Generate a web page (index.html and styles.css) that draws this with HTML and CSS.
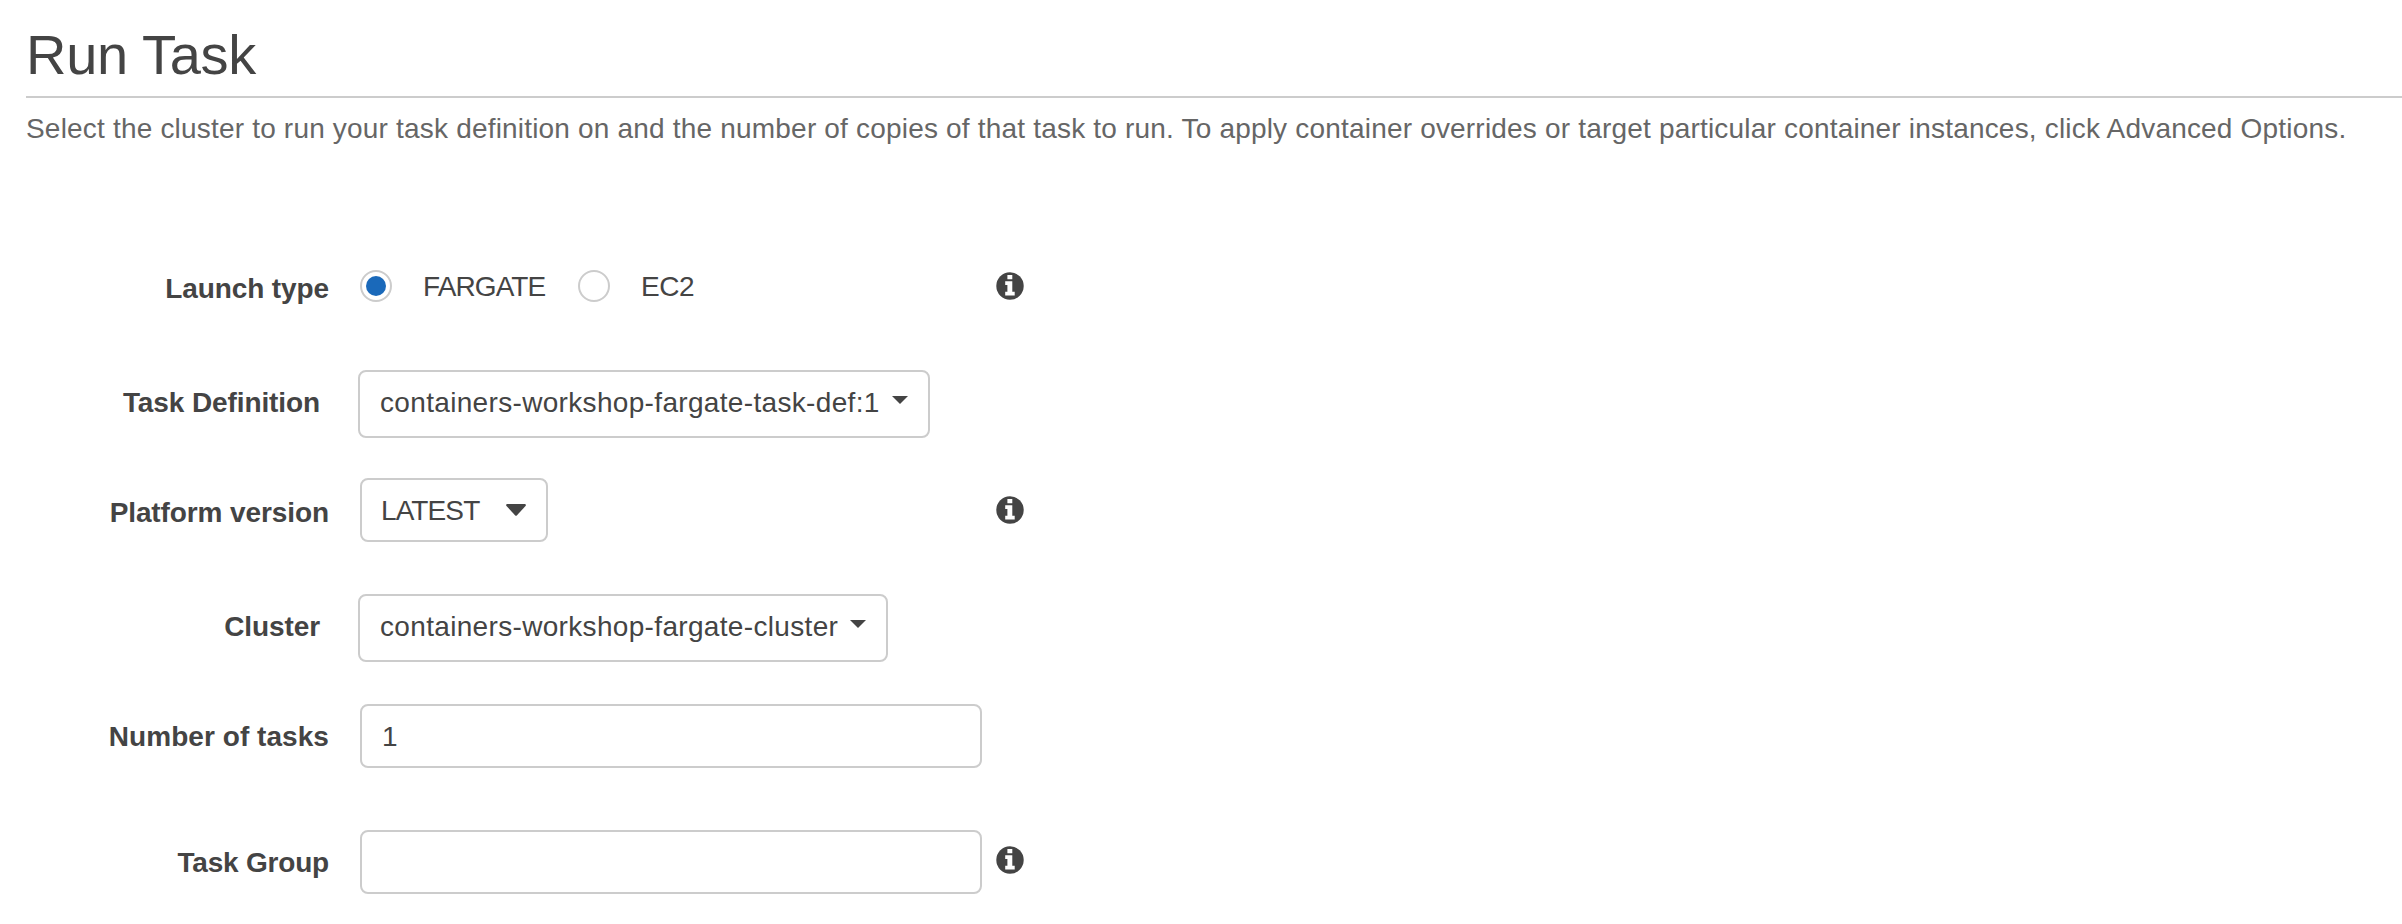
FILE: index.html
```html
<!DOCTYPE html>
<html lang="en">
<head>
<meta charset="utf-8">
<title>Run Task</title>
<link rel="stylesheet" href="styles.css">
</head>
<body>
<svg class="sprite" aria-hidden="true">
  <symbol id="info" viewBox="0 0 28 28">
    <circle cx="14" cy="14" r="13.700" fill="#444"/>
    <path fill="#fff" d="M11.400 3h4.900v4.200h-4.900zM9.200 9.300h7.100v10.500h2.400v3.700H9.200v-3.700h2.200V13H9.200z"/>
  </symbol>
</svg>
<main class="page">
  <h1 class="title">Run Task</h1>
  <p class="intro">Select the cluster to run your task definition on and the number of copies of that task to run. To apply container overrides or target particular container instances, click Advanced Options.</p>
  <form class="form">
    <div class="row row-launch">
      <span class="label label-launch">Launch type</span>
      <div class="field radios">
        <span class="radio checked"></span><span class="radio-text fargate">FARGATE</span>
        <span class="radio"></span><span class="radio-text ec2">EC2</span>
      </div>
      <svg class="info"><use href="#info"/></svg>
    </div>
    <div class="row row-definition dropdown-row">
      <span class="label label-definition">Task Definition</span>
      <div class="box dropdown definition"><span>containers-workshop-fargate-task-def:1</span><i class="caret"></i></div>
    </div>
    <div class="row row-platform">
      <span class="label label-platform">Platform version</span>
      <div class="field">
        <div class="box select"><span>LATEST</span><svg class="arrow" viewBox="0 0 20 12"><path d="M1 0h18q1.600.600.500 2L11 11.300q-1 1-2 0L.500 2Q-.600.600 1 0z" fill="#444"/></svg></div>
      </div>
      <svg class="info"><use href="#info"/></svg>
    </div>
    <div class="row row-cluster dropdown-row">
      <span class="label label-cluster">Cluster</span>
      <div class="box dropdown cluster"><span>containers-workshop-fargate-cluster</span><i class="caret"></i></div>
    </div>
    <div class="row row-number">
      <span class="label label-number">Number of tasks</span>
      <div class="field"><div class="box input">1</div></div>
    </div>
    <div class="row row-group">
      <span class="label label-group">Task Group</span>
      <div class="field"><div class="box input"></div></div>
      <svg class="info"><use href="#info"/></svg>
    </div>
  </form>
</main>
</body>
</html>
```
FILE: styles.css
```css
* { box-sizing: border-box; }
body {
  margin: 0;
  background: #fff;
  color: #444;
  font: 28px/34px "Liberation Sans", Arial, sans-serif;
  overflow: hidden;
}
.sprite { display: block; width: 0; height: 0; }
.page { padding: 22px 0 0 26px; }
.title {
  margin: 0;
  height: 76px;
  border-bottom: 2px solid #ccc;
  font-size: 56px;
  font-weight: 400;
  line-height: 66px;
  letter-spacing: -0.3px;
}
.intro {
  margin: 14px 0 0;
  color: #666;
  white-space: nowrap;
  letter-spacing: 0.19px;
}
.form { margin-top: 124px; }
.row {
  display: grid;
  grid-template-columns: 303px 622px 28px;
  column-gap: 31px;
  align-items: start;
}
.row .info { margin-left: -17px; }
.dropdown-row { grid-template-columns: 294px auto; column-gap: 38px; justify-content: start; }
.label { font-weight: 700; text-align: right; white-space: nowrap; letter-spacing: -0.1px; }
.label-group { letter-spacing: -0.2px; }
.label-number { letter-spacing: 0.05px; }
.row-launch { height: 32px; }
.row-launch .label { padding-top: 2px; }
.row-launch .info { margin-top: 2px; }
.row-definition { margin-top: 68px; }
.row-definition .label, .row-cluster .label, .row-number .label, .row-group .label { padding-top: 16px; }
.row-platform { margin-top: 40px; }
.row-platform .label { padding-top: 18px; }
.row-platform .info { margin-top: 18px; }
.row-cluster { margin-top: 52px; }
.row-number { margin-top: 42px; }
.row-group { margin-top: 62px; }
.row-group .info { margin-top: 16px; }
.info { display: block; width: 28px; height: 28px; }
.radios { display: flex; align-items: flex-start; }
.radio {
  display: grid;
  place-items: center;
  flex: none;
  width: 32px;
  height: 32px;
  border: 2px solid #ccc;
  border-radius: 50%;
}
.checked::after {
  content: "";
  width: 20px;
  height: 20px;
  border-radius: 50%;
  background: #1a69ba;
}
.radio-text { padding-left: 31px; }
.fargate { width: 186px; letter-spacing: -0.9px; }
.ec2 { letter-spacing: -0.5px; }
.box {
  display: flex;
  height: 64px;
  padding: 14px 20px;
  border: 2px solid #ccc;
  border-radius: 8px;
  white-space: nowrap;
}
.dropdown { height: 68px; }
.definition { width: 572px; justify-content: space-between; letter-spacing: 0.33px; }
.cluster { width: 530px; justify-content: space-between; letter-spacing: 0.33px; }
.caret {
  width: 0;
  height: 0;
  margin-top: 10px;
  border: 8px solid transparent;
  border-top-color: #444;
  border-bottom: 0;
}
.select { width: 188px; padding-left: 19px; justify-content: space-between; letter-spacing: -0.9px; }
.arrow { width: 20px; height: 12px; margin-top: 10px; }
.input { width: 622px; }
```
